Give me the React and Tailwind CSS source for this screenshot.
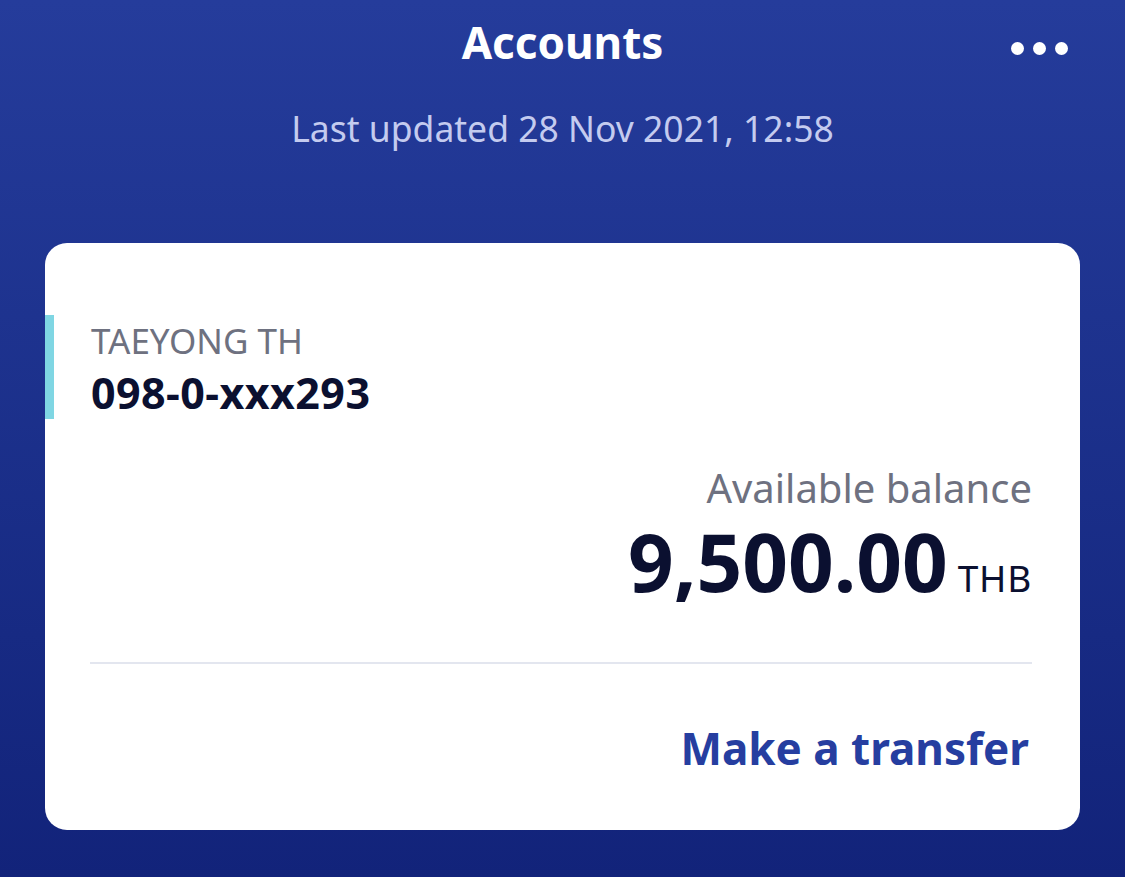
export default function App() {
    return (
        <div
            className="h-[877px] w-[1125px] overflow-hidden bg-gradient-to-b from-[#253c9b] to-[#12237a]"
            style={{ fontFamily: '"Noto Sans", "Open Sans", sans-serif' }}
        >
            {/* Header */}
            <div className="relative flex h-[84px] items-center justify-center">
                <h1 className="text-[44px] font-bold leading-[46px] text-white">Accounts</h1>
                <div className="absolute right-[57px] top-[42px] flex gap-[9px]">
                    <span className="h-[13px] w-[13px] rounded-full bg-white" />
                    <span className="h-[13px] w-[13px] rounded-full bg-white" />
                    <span className="h-[13px] w-[13px] rounded-full bg-white" />
                </div>
            </div>
            <p className="mt-[20px] text-center text-[35.5px] leading-[48px] text-[#c4cbef]">
                Last updated 28 Nov 2021, 12:58
            </p>

            {/* Account card */}
            <div className="mx-[45px] mt-[91px] h-[587px] rounded-[22px] bg-white pt-[72px]">
                <div className="border-l-[9px] border-[#7fd6e3] pb-[1px] pl-[37px] pt-[4px]">
                    <p className="text-[35px] leading-[44px] text-[#6e7180]">TAEYONG TH</p>
                    <p className="mt-[5px] text-[43px] font-bold leading-[50px] tracking-[0.01em] text-[#0b1030]">
                        098-0-xxx293
                    </p>
                </div>
                <div className="mt-[45px] flex flex-col items-end pr-[48px]">
                    <p className="text-[40px] leading-[48px] text-[#6e7180]">Available balance</p>
                    <div className="mt-[9px] flex items-baseline gap-[10px]">
                        <span className="text-[80px] font-bold leading-[80px] text-[#0b1030]">9,500.00</span>
                        <span className="text-[37px] leading-[44px] tracking-[0.02em] text-[#0b1030]">THB</span>
                    </div>
                </div>
                <div className="ml-[45px] mr-[48px] mt-[61px] h-[2px] bg-[#e3e6ef]" />
                <div className="mt-[57px] flex justify-end pr-[51px]">
                    <button className="text-[44px] font-bold leading-[54px] text-[#263ea0]">Make a transfer</button>
                </div>
            </div>
        </div>
    );
}
